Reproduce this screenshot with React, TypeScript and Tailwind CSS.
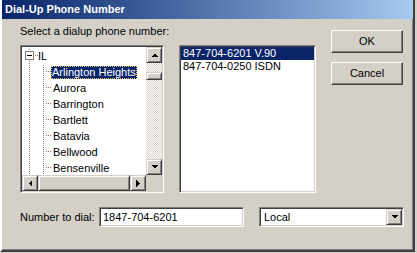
import React from 'react'

const font = { fontFamily: '"Liberation Sans", Arial, sans-serif' }

// classic 3d edges
const sunken =
  'border border-t-[#808080] border-l-[#808080] border-b-white border-r-white shadow-[inset_1px_1px_#404040,inset_-1px_-1px_#d4d0c8] p-px'
const raised =
  'border border-t-[#d4d0c8] border-l-[#d4d0c8] border-b-[#404040] border-r-[#404040] shadow-[inset_1px_1px_#fff,inset_-1px_-1px_#808080] bg-[#d4d0c8]'
const pushBtn =
  'border border-t-white border-l-white border-b-[#404040] border-r-[#404040] shadow-[inset_-1px_-1px_#808080] bg-[#d4d0c8]'
const checker =
  'bg-[repeating-conic-gradient(#d4d0c8_0%_25%,#ffffff_0%_50%)] bg-[length:2px_2px]'

type Dir = 'up' | 'down' | 'left' | 'right'

function Arrow({ dir }: { dir: Dir }) {
  const pts: Record<Dir, string> = {
    up: '0,4 7,4 3.5,0.5',
    down: '0,0 7,0 3.5,3.5',
    left: '4,0 4,7 0.5,3.5',
    right: '0,0 0,7 3.5,3.5',
  }
  const vertical = dir === 'up' || dir === 'down'
  return (
    <svg width={vertical ? 7 : 4} height={vertical ? 4 : 7} shapeRendering="crispEdges">
      <polygon points={pts[dir]} fill="#000" />
    </svg>
  )
}

function ScrollBtn({ dir }: { dir: Dir }) {
  return (
    <div className={`${raised} w-4 h-4 shrink-0 flex items-center justify-center`}>
      <Arrow dir={dir} />
    </div>
  )
}

const cities = ['Arlington Heights', 'Aurora', 'Barrington', 'Bartlett', 'Batavia', 'Bellwood', 'Bensenville']

function Dots({ x1, y1, x2, y2 }: { x1: number; y1: number; x2: number; y2: number }) {
  return (
    <line
      x1={x1 + 0.5}
      y1={y1 + 0.5}
      x2={x2 + 0.5}
      y2={y2 + 0.5}
      stroke="#808080"
      strokeDasharray="1 1"
      shapeRendering="crispEdges"
    />
  )
}

function TreeRoot() {
  return (
    <div className="h-4 flex items-center">
      <svg width={16} height={16} className="shrink-0">
        <Dots x1={7} y1={0} x2={7} y2={3} />
        <Dots x1={7} y1={12} x2={7} y2={16} />
        <Dots x1={12} y1={7} x2={15} y2={7} />
        <rect x={3.5} y={3.5} width={8} height={8} fill="#fff" stroke="#808080" shapeRendering="crispEdges" />
        <line x1={5} y1={7.5} x2={10} y2={7.5} stroke="#000" shapeRendering="crispEdges" />
      </svg>
      <span className="text-[11px] leading-[13px] text-black">IL</span>
    </div>
  )
}

function TreeChild({ label, selected }: { label: string; selected?: boolean }) {
  return (
    <div className="h-4 flex items-center">
      <svg width={29} height={16} className="shrink-0">
        <Dots x1={7} y1={0} x2={7} y2={16} />
        <Dots x1={21} y1={0} x2={21} y2={16} />
        <Dots x1={23} y1={7} x2={28} y2={7} />
      </svg>
      <span
        className={
          selected
            ? 'text-[11px] leading-[11px] px-[1px] py-[1px] bg-[#0a246a] text-white outline-1 outline-dotted outline-[#e0c060] -outline-offset-1 whitespace-nowrap'
            : 'text-[11px] leading-[13px] px-[2px] text-black whitespace-nowrap'
        }
      >
        {label}
      </span>
    </div>
  )
}

function TreeBox() {
  return (
    <div className={`${sunken} w-[144px] h-[148px] bg-white flex flex-col`}>
      <div className="flex flex-1 min-h-0">
        <div className="flex-1 overflow-hidden pt-px">
          <TreeRoot />
          {cities.map((c, i) => (
            <TreeChild key={c} label={c} selected={i === 0} />
          ))}
        </div>
        <div className="w-4 flex flex-col">
          <ScrollBtn dir="up" />
          <div className={`flex-1 flex flex-col ${checker}`}>
            <div className="h-[9px]" />
            <div className={`${raised} h-[8px]`} />
          </div>
          <ScrollBtn dir="down" />
        </div>
      </div>
      <div className="h-4 flex">
        <ScrollBtn dir="left" />
        <div className={`${raised} flex-1`} />
        <ScrollBtn dir="right" />
        <div className="w-4 bg-[#d4d0c8]" />
      </div>
    </div>
  )
}

function NumberList() {
  const rows = ['847-704-6201 V.90', '847-704-0250 ISDN']
  return (
    <div className={`${sunken} w-[137px] h-[148px] bg-white`}>
      {rows.map((r, i) => (
        <div
          key={r}
          className={`h-[13px] px-[2px] text-[11px] leading-[13px] whitespace-nowrap ${
            i === 0 ? 'bg-[#0a246a] text-white' : 'text-black'
          }`}
        >
          {r}
        </div>
      ))}
    </div>
  )
}

export default function App() {
  return (
    <div className="w-[417px] h-[253px] bg-[#d4d0c8] overflow-hidden" style={font}>
      <div className="w-[415px] h-[252px] flex flex-col border-l-2 border-l-white border-r-2 border-r-[#404040] border-b-2 border-b-[#404040] shadow-[inset_-1px_-1px_#808080]">
        {/* Title bar */}
        <div className="h-[19px] bg-linear-to-r from-[#0a246a] to-[#a6caf0] flex items-center pl-[3px]">
          <span className="text-[11px] font-bold text-white leading-[13px]">Dial-Up Phone Number</span>
        </div>

        <div className="flex-1 flex flex-col pl-[18px]">
          <div className="flex">
            <div className="flex flex-col">
              <div className="mt-[6px] h-[13px] text-[11px] leading-[13px] text-black">
                Select a dialup phone number:
              </div>
              <div className="mt-[7px] flex gap-[15px]">
                <TreeBox />
                <NumberList />
              </div>
            </div>
            <div className="ml-[15px] mt-[11px] flex flex-col gap-[9px]">
              <button className={`${pushBtn} w-[72px] h-[23px] text-[11px] text-black`}>OK</button>
              <button className={`${pushBtn} w-[72px] h-[23px] text-[11px] text-black`}>Cancel</button>
            </div>
          </div>

          <div className="mt-[14px] flex items-center h-5">
            <div className="w-[79px] text-[11px] leading-[13px] text-black">Number to dial:</div>
            <div className={`${sunken} w-[145px] h-5 bg-white flex items-center pl-[3px] text-[11px] text-black`}>
              1847-704-6201
            </div>
            <div className={`${sunken} ml-[15px] w-[145px] h-5 bg-white flex items-center text-[11px] text-black`}>
              <span className="flex-1 pl-[3px]">Local</span>
              <ScrollBtn dir="down" />
            </div>
          </div>
        </div>
      </div>
    </div>
  )
}
